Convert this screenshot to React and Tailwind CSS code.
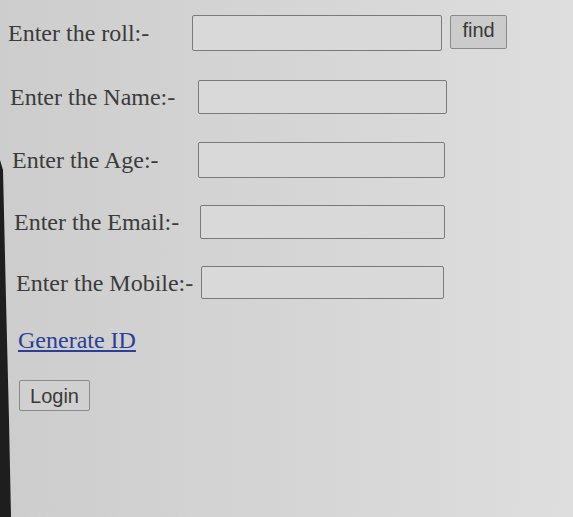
import React from 'react';

const rows = [
  { label: 'Enter the roll:-', top: 'mt-[15px]', pl: 'pl-[8px]', lw: 'w-[184px]', iw: 'w-[250px]', ih: 'h-[36px]', find: true },
  { label: 'Enter the Name:-', top: 'mt-[29px]', pl: 'pl-[10px]', lw: 'w-[188px]', iw: 'w-[249px]', ih: 'h-[34px]' },
  { label: 'Enter the Age:-', top: 'mt-[28px]', pl: 'pl-[12px]', lw: 'w-[186px]', iw: 'w-[247px]', ih: 'h-[36px]' },
  { label: 'Enter the Email:-', top: 'mt-[27px]', pl: 'pl-[14px]', lw: 'w-[186px]', iw: 'w-[245px]', ih: 'h-[34px]' },
  { label: 'Enter the Mobile:-', top: 'mt-[27px]', pl: 'pl-[16px]', lw: 'w-[185px]', iw: 'w-[243px]', ih: 'h-[33px]' },
];

export default function App() {
  return (
    <div className="relative w-[573px] h-[517px] overflow-hidden bg-gradient-to-r from-[#cdcdcd] via-[#d5d5d5] to-[#dedede] font-['Liberation_Serif',serif] text-[#3b3b3b]">
      <svg className="absolute left-0 top-0" width="14" height="517" viewBox="0 0 14 517">
        <polygon points="0,160 3,170 6,300 9,420 11,517 0,517" fill="#1e1e1e" />
      </svg>
      <div className="flex flex-col">
        {rows.map((r) => (
          <div key={r.label} className={`flex items-center ${r.top} ${r.pl}`}>
            <span className={`${r.lw} shrink-0 text-[24px] leading-none`}>{r.label}</span>
            <input
              type="text"
              className={`${r.iw} ${r.ih} rounded-[2px] border border-[#7a7a7a] bg-[#d9d9d9] outline-none`}
            />
            {r.find && (
              <button className="ml-[8px] -mt-[3px] w-[57px] h-[34px] rounded-[2px] border border-[#8a8a8a] bg-[#cbcbcb] pb-[4px] font-['Liberation_Sans',Arial,sans-serif] text-[20px] leading-none text-[#3a3a3a]">
                find
              </button>
            )}
          </div>
        ))}
        <div className="pl-[18px] mt-[27px]">
          <a href="#" className="text-[24px] leading-[28px] text-[#2b3f96] underline decoration-[2px] underline-offset-[2px]">
            Generate ID
          </a>
        </div>
        <div className="pl-[19px] mt-[25px]">
          <button className="w-[71px] h-[31px] rounded-[2px] border border-[#8a8a8a] bg-[#d0d0d0] font-['Liberation_Sans',Arial,sans-serif] text-[20px] leading-none text-[#3a3a3a]">
            Login
          </button>
        </div>
      </div>
    </div>
  );
}
